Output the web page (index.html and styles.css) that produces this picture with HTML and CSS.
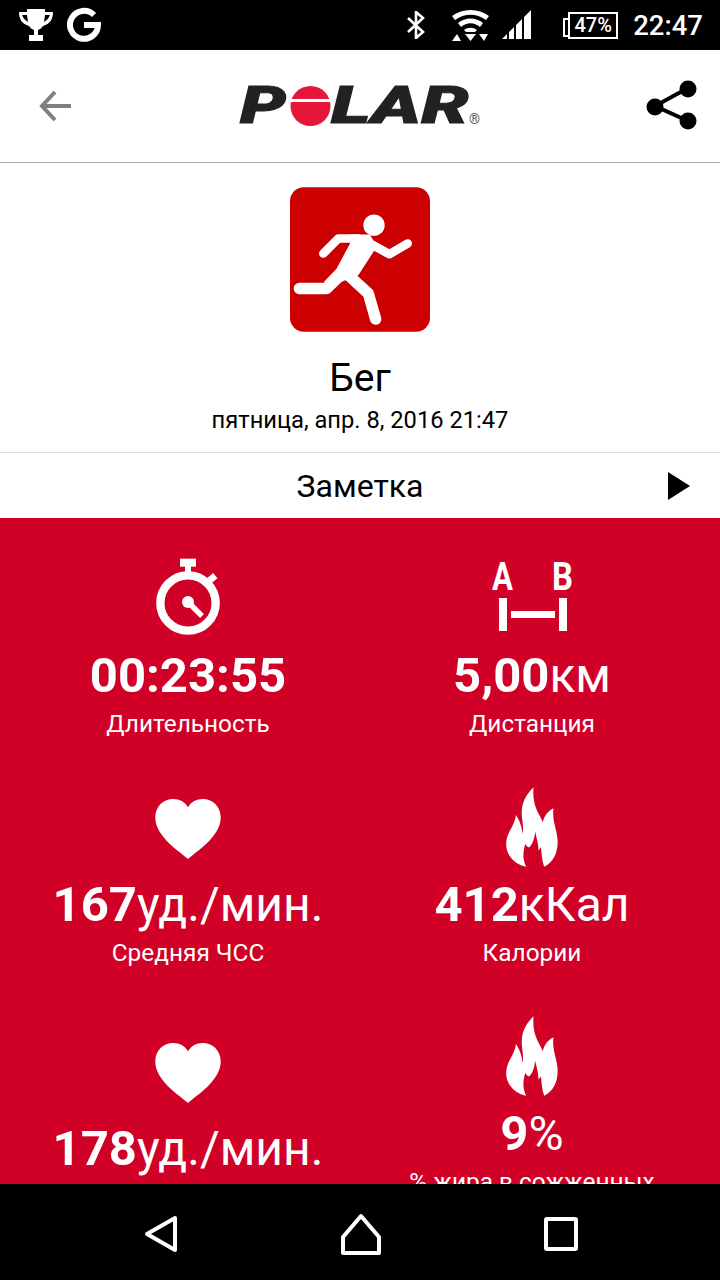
FILE: index.html
```html
<!DOCTYPE html>
<html lang="ru">
<head>
    <meta charset="UTF-8">
    <meta name="viewport" content="width=device-width, initial-scale=1.0">
    <title>Polar Бег</title>
    <link rel="stylesheet" href="styles.css">
</head>
<body>
    <!-- shared icons -->
    <svg class="defs" width="0" height="0">
        <symbol id="heart" viewBox="78 30 192 176">
            <path d="M174 206C150 184 78 140 78 84 78 50 104 30 130 30c20 0 34 8 44 24 10-16 24-24 44-24 26 0 52 20 52 54 0 56-72 100-96 122z" fill="#fff"/>
        </symbol>
        <symbol id="flame" viewBox="108 24 158 240">
            <path d="M190 25C170 45 152 70 155 110 157 130 160 145 158 165 155 145 148 122 137 108 135 140 108 160 108 195 108 230 135 258 168 263 155 240 160 215 165 195 172 205 175 205 178 205 190 190 193 175 195 158 200 180 205 195 205 215L212 205C215 225 215 245 222 263 250 250 265 220 262 180 260 150 245 125 250 88 235 95 222 110 218 130 210 105 185 85 190 25z" fill="#fff"/>
        </symbol>
    </svg>

    <div class="statusbar">
        <div class="status-left">
            <svg width="36" height="34" viewBox="0 0 36 34">
                <path d="M9 1h18v3h8c0 7-3 12-10 14-1 2-3 3-5 4v5h5v6H11v-6h5v-5c-2-1-4-2-5-4C4 16 1 11 1 4h8zM4 7c1 3 3 5 6 7L9 7zM32 7h-5l-1 7c3-2 5-4 6-7z" fill="#fff" fill-rule="evenodd"/>
            </svg>
            <svg width="34" height="36" viewBox="0 0 34 36">
                <path d="M27 8A14 14 0 1 0 31 18H17" fill="none" stroke="#fff" stroke-width="6"/>
            </svg>
        </div>
        <div class="status-right">
            <svg class="ic-bt" width="20" height="28" viewBox="0 0 20 28">
                <path d="M2 7l15 14-7 6V1l7 6L2 21" fill="none" stroke="#fff" stroke-width="2.600"/>
            </svg>
            <svg class="ic-wifi" width="40" height="33" viewBox="0 0 40 33">
                <path d="M1 7C11-1 28-1 38 7l-3 4C25 4 14 4 4 11z" fill="#fff"/>
                <path d="M7 14c7-6 18-6 25 0l-3 4c-6-5-13-5-19 0z" fill="#fff"/>
                <path d="M13 21c4-3 9-3 13 0l-2 2h-9z" fill="#fff"/>
                <path d="M6 25l4 7H1zM14 25h11l-5.500 7zM28 25h9l-4 7z" fill="#fff"/>
            </svg>
            <svg class="ic-signal" width="30" height="30" viewBox="0 0 30 30">
                <path d="M0 29l5-5v5zM7 22l5-5v12H7zM14 15l6-6v20h-6zM22 7l7-7v29h-7z" fill="#fff"/>
            </svg>
            <div class="battery"><span>47%</span></div>
            <span class="clock">22:47</span>
        </div>
    </div>

    <div class="topbar">
        <svg class="ic-back" width="34" height="32" viewBox="0 0 34 32">
            <path d="M32 16H3M16 2L3 16l13 14" fill="none" stroke="#808080" stroke-width="4"/>
        </svg>
        <div class="logo">
            <span class="logo-p">P</span>
            <svg class="logo-o" width="41" height="40" viewBox="0 0 41 40">
                <circle cx="20.500" cy="20" r="20" fill="#e4173a"/>
                <rect x="0" y="13" width="41" height="3" fill="#fff"/>
            </svg>
            <span class="logo-lar">LAR</span>
            <span class="logo-reg">®</span>
        </div>
        <svg class="ic-share" width="52" height="52" viewBox="0 0 52 52">
            <path d="M42 8L9 26l33 15" fill="none" stroke="#000" stroke-width="4"/>
            <circle cx="42" cy="9" r="8.500"/>
            <circle cx="9" cy="27" r="8.500"/>
            <circle cx="42" cy="41" r="8.500"/>
        </svg>
    </div>

    <div class="summary">
        <svg width="140" height="145" viewBox="60 36 420 434">
            <rect x="60" y="36" width="420" height="434" rx="42" fill="#cc0000"/>
            <circle cx="312" cy="150" r="32" fill="#fff"/>
            <path d="M240 205L200 280 160 322 215 320 265 300 320 215 300 178H240z" fill="#fff"/>
            <path d="M160 235l45-45h60M285 197l73 40 55-32" fill="none" stroke="#fff" stroke-width="26" stroke-linecap="round" stroke-linejoin="round"/>
            <path d="M88 340h82l45-44M235 300l60 55 22 77" fill="none" stroke="#fff" stroke-width="34" stroke-linecap="round" stroke-linejoin="round"/>
        </svg>
        <div class="sport-name">Бег</div>
        <div class="sport-date">пятница, апр. 8, 2016 21:47</div>
    </div>

    <div class="note-row">
        <span class="note-text">Заметка</span>
        <svg class="note-arrow" width="22" height="28" viewBox="0 0 22 28"><path d="M0 0l22 14L0 28z"/></svg>
    </div>

    <div class="stats">
        <div class="stat">
            <div class="stat-icon">
                <svg width="66" height="80" viewBox="75 25 198 240">
                    <rect x="150" y="27" width="48" height="24" fill="#fff"/>
                    <rect x="165" y="45" width="18" height="30" fill="#fff"/>
                    <path d="M232 98l24-20" stroke="#fff" stroke-width="20" fill="none"/>
                    <circle cx="174" cy="160" r="83" fill="none" stroke="#fff" stroke-width="25"/>
                    <circle cx="174" cy="157" r="18" fill="#fff"/>
                    <path d="M174 157l42 42" stroke="#fff" stroke-width="16" fill="none"/>
                </svg>
            </div>
            <div class="stat-value">00:23:55</div>
            <div class="stat-label">Длительность</div>
        </div>
        <div class="stat">
            <div class="stat-icon">
                <svg width="90" height="80" viewBox="-5 0 90 80">
                    <text x="0" y="32" class="ab-letter" textLength="21" lengthAdjust="spacingAndGlyphs">A</text>
                    <text x="60" y="32" class="ab-letter" textLength="21" lengthAdjust="spacingAndGlyphs">B</text>
                    <rect x="7" y="40" width="8" height="33" fill="#fff"/>
                    <rect x="67" y="40" width="8" height="33" fill="#fff"/>
                    <rect x="19" y="53" width="44" height="7" fill="#fff"/>
                </svg>
            </div>
            <div class="stat-value">5,00<span class="unit">км</span></div>
            <div class="stat-label">Дистанция</div>
        </div>
        <div class="stat">
            <div class="stat-icon">
                <svg class="ic-heart" width="66" height="60"><use href="#heart"/></svg>
            </div>
            <div class="stat-value">167<span class="unit">уд./мин.</span></div>
            <div class="stat-label">Средняя ЧСС</div>
        </div>
        <div class="stat">
            <div class="stat-icon">
                <svg width="53" height="80"><use href="#flame"/></svg>
            </div>
            <div class="stat-value">412<span class="unit">кКал</span></div>
            <div class="stat-label">Калории</div>
        </div>
        <div class="stat">
            <div class="stat-icon">
                <svg class="ic-heart" width="66" height="60"><use href="#heart"/></svg>
            </div>
            <div class="stat-value">178<span class="unit">уд./мин.</span></div>
            <div class="stat-label">Максимальная ЧСС</div>
        </div>
        <div class="stat">
            <div class="stat-icon">
                <svg width="53" height="80"><use href="#flame"/></svg>
            </div>
            <div class="stat-value">9<span class="unit">%</span></div>
            <div class="stat-label">% жира в сожженных<br>калориях</div>
        </div>
    </div>

    <div class="navbar">
        <svg width="34" height="38" viewBox="0 0 34 38"><path d="M31 3v32L3 19z" fill="none" stroke="#fff" stroke-width="4" stroke-linejoin="round"/></svg>
        <svg width="42" height="42" viewBox="0 0 42 42"><path d="M21 3l18 21v16H3V24z" fill="none" stroke="#fff" stroke-width="4" stroke-linejoin="round"/></svg>
        <svg width="34" height="34" viewBox="0 0 34 34"><rect x="2" y="2" width="30" height="30" fill="none" stroke="#fff" stroke-width="4" rx="1"/></svg>
    </div>
</body>
</html>
```

FILE: styles.css
```css
body {
    margin: 0;
    width: 720px;
    height: 1280px;
    display: flex;
    flex-direction: column;
    overflow: hidden;
    background: #fff;
    font-family: Roboto, sans-serif;
}
svg {
    display: block;
}
.defs {
    position: absolute;
}

/* status bar */
.statusbar {
    height: 50px;
    flex: none;
    background: #000;
    color: #fff;
    display: flex;
    justify-content: space-between;
    align-items: center;
    padding: 0 17px 0 18px;
}
.status-left {
    display: flex;
    align-items: center;
    gap: 13px;
}
.status-right {
    display: flex;
    align-items: center;
}
.ic-bt {
    margin-right: 25px;
}
.ic-wifi {
    margin-right: 11px;
}
.ic-signal {
    margin-right: 36px;
}
.battery {
    width: 50px;
    height: 27px;
    box-sizing: border-box;
    border: 2px solid #fff;
    position: relative;
    display: flex;
    align-items: center;
    justify-content: center;
    font-size: 20px;
    font-weight: 500;
    margin-right: 15px;
}
.battery::before {
    content: "";
    position: absolute;
    left: -7px;
    top: 4px;
    width: 3px;
    height: 15px;
    border: 2px solid #fff;
    border-right: none;
}
.clock {
    font-size: 27.500px;
    font-weight: 500;
}

/* top bar with logo */
.topbar {
    height: 113px;
    flex: none;
    box-sizing: border-box;
    border-bottom: 1px solid #aaa;
    display: grid;
    grid-template-columns: 1fr auto 1fr;
    align-items: center;
    padding: 0 22px;
}
.ic-back {
    margin-left: 17px;
}
.ic-share {
    justify-self: end;
}
.logo {
    display: flex;
    align-items: center;
    height: 40px;
    color: #222;
    font-weight: 900;
    font-style: italic;
    font-size: 52px;
    line-height: 40px;
    -webkit-text-stroke: 1px #222;
}
.logo-p {
    width: 50px;
    transform: scaleX(1.4);
    transform-origin: left;
}
.logo-o {
    flex: none;
}
.logo-lar {
    width: 138px;
    transform: scaleX(1.45);
    transform-origin: left;
}
.logo-reg {
    font-size: 14px;
    line-height: 14px;
    font-weight: 400;
    font-style: normal;
    color: #555;
    align-self: flex-end;
    -webkit-text-stroke: 0;
}

/* activity title */
.summary {
    flex: none;
    height: 290px;
    box-sizing: border-box;
    padding-top: 24px;
    display: flex;
    flex-direction: column;
    align-items: center;
    border-bottom: 1px solid #ddd;
}
.sport-name {
    margin-top: 23px;
    font-size: 39px;
    line-height: 46px;
}
.sport-date {
    margin-top: 3px;
    font-size: 23.700px;
    line-height: 32px;
}
.note-row {
    flex: none;
    height: 65px;
    display: grid;
    grid-template-columns: 1fr auto 1fr;
    align-items: center;
    padding: 0 30px;
}
.note-text {
    grid-column: 2;
    font-size: 32px;
}
.note-arrow {
    justify-self: end;
}

/* red stats */
.stats {
    flex: 1;
    min-height: 0;
    overflow: hidden;
    background: #d00027;
    color: #fff;
    box-sizing: border-box;
    padding: 40px 16px 0;
    display: grid;
    grid-template-columns: 1fr 1fr;
    row-gap: 48px;
    align-items: center;
    align-content: start;
    text-align: center;
}
.stat-icon {
    height: 80px;
    display: flex;
    justify-content: center;
    align-items: center;
}
.ic-heart {
    margin-top: 4px;
}
.stat-value {
    margin-top: 10px;
    font-size: 49px;
    font-weight: 700;
    line-height: 56px;
}
.unit {
    font-weight: 400;
    font-size: 48px;
}
.stat-label {
    margin-top: 5px;
    font-size: 24.400px;
    line-height: 30px;
}
.ab-letter {
    font-family: Roboto, sans-serif;
    font-size: 38px;
    font-weight: 700;
    fill: #fff;
}

/* android nav */
.navbar {
    height: 96px;
    flex: none;
    background: #000;
    display: flex;
    justify-content: center;
    align-items: center;
    gap: 162px;
    padding: 3px 0 0 2px;
    box-sizing: border-box;
}
```
